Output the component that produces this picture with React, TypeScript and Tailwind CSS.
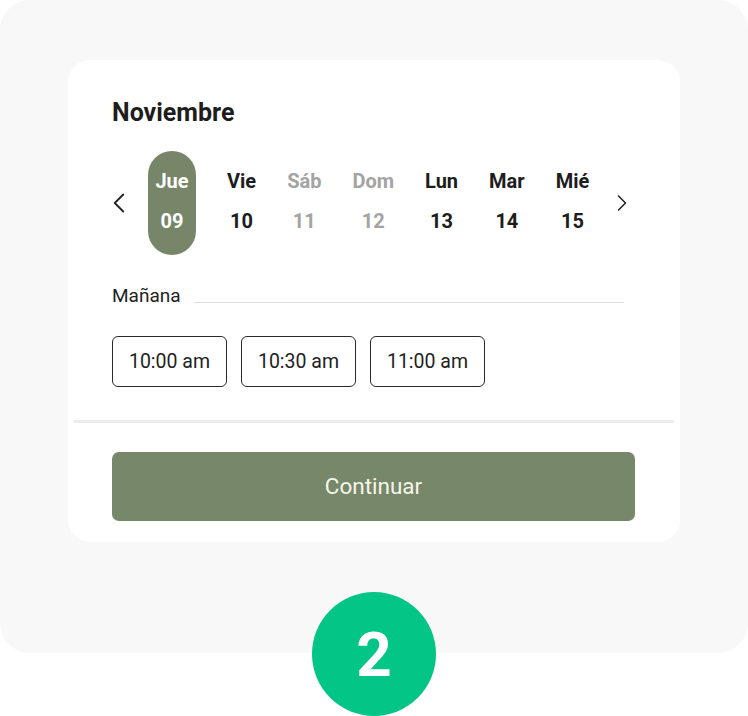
import { ChevronLeft, ChevronRight } from 'lucide-react'

interface Day {
  name: string
  num: string
  muted?: boolean
  selected?: boolean
}

const days: Day[] = [
  { name: 'Jue', num: '09', selected: true },
  { name: 'Vie', num: '10' },
  { name: 'Sáb', num: '11', muted: true },
  { name: 'Dom', num: '12', muted: true },
  { name: 'Lun', num: '13' },
  { name: 'Mar', num: '14' },
  { name: 'Mié', num: '15' },
]

const times = ['10:00 am', '10:30 am', '11:00 am']

export default function App() {
  return (
    <div
      className="relative h-[716px] w-[748px] bg-white"
      style={{ fontFamily: 'Roboto, "Liberation Sans", sans-serif' }}
    >
      <div className="h-[653px] rounded-[30px] bg-[#f8f8f8] px-[68px] pt-[60px]">
        <div className="h-[482px] rounded-[22px] bg-white">
          <div className="px-[44px] pt-[38px]">
            <h2 className="text-[25px] leading-[30px] font-bold text-[#1d1d1d]">
              Noviembre
            </h2>

            {/* Days */}
            <div className="mt-[23px] flex items-center">
              <div className="flex w-[36px] items-center">
                <ChevronLeft className="-ml-[10px] h-[34px] w-[34px] text-[#222]" strokeWidth={1.3} />
              </div>
              <div className="flex gap-[31px]">
                {days.map((d) => (
                  <div
                    key={d.name}
                    className={`flex h-[104px] flex-col items-center gap-[16px] rounded-full pt-[18px] text-[20px] leading-[24px] font-bold ${
                      d.selected
                        ? 'w-[48px] bg-[#778668] text-white'
                        : d.muted
                          ? 'text-[#a3a3a3]'
                          : 'text-[#1d1d1d]'
                    }`}
                  >
                    <span>{d.name}</span>
                    <span>{d.num}</span>
                  </div>
                ))}
              </div>
              <div className="ml-auto flex w-[28px] justify-center">
                <ChevronRight className="h-[34px] w-[34px] text-[#222]" strokeWidth={1.3} />
              </div>
            </div>

            {/* Mañana */}
            <div className="mt-[29px] flex items-center">
              <span className="text-[19px] leading-[24px] text-[#222]">Mañana</span>
              <div className="mt-[12px] ml-[13px] h-px w-[430px] bg-[#e0e0e0]" />
            </div>

            <div className="mt-[28px] flex gap-[14px]">
              {times.map((t) => (
                <button
                  key={t}
                  className="h-[51px] w-[115px] rounded-[6px] border border-[#2a2a2a] text-[19.5px] text-[#222]"
                >
                  {t}
                </button>
              ))}
            </div>
          </div>

          <div className="mx-[6px] mt-[33px] h-[3px] bg-[#ececec]" />

          <div className="px-[44px] pt-[29px]">
            <button className="h-[69px] w-[523px] rounded-[7px] bg-[#77876a] text-[22.5px] text-[#f6f6ea]">
              Continuar
            </button>
          </div>
        </div>
      </div>

      <div className="absolute top-[592px] left-[312px] flex h-[124px] w-[124px] items-center justify-center rounded-full bg-[#03c586] text-[62px] font-bold text-white">
        2
      </div>
    </div>
  )
}
